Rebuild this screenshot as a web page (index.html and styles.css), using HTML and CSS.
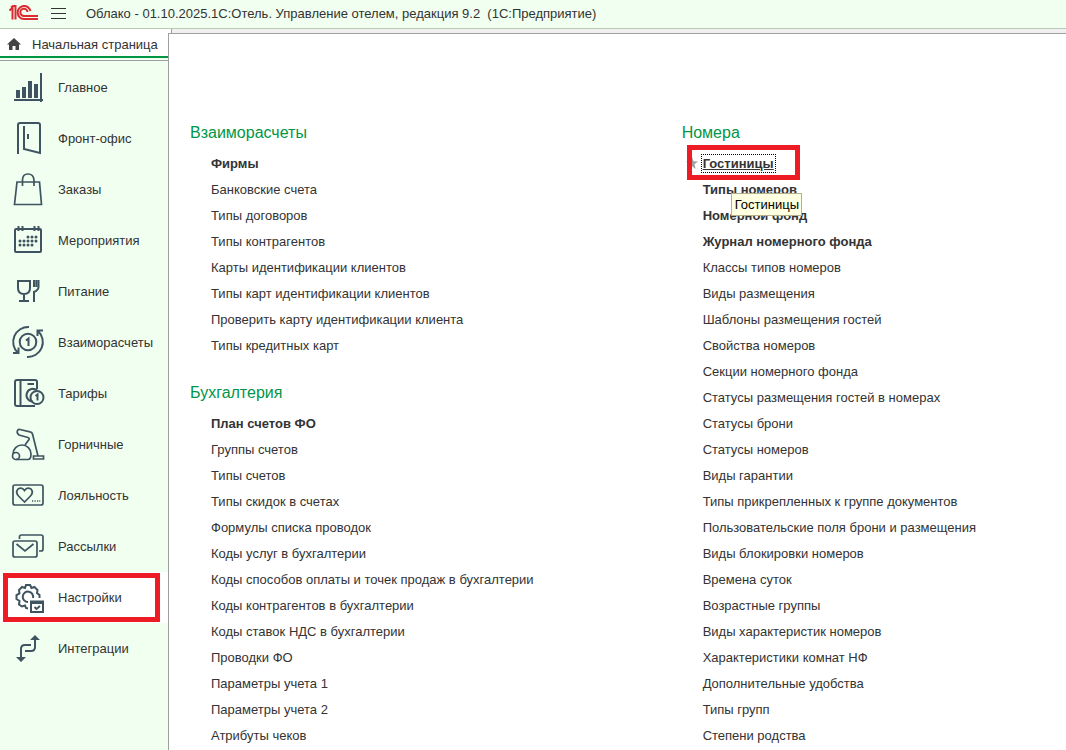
FILE: index.html
```
<!DOCTYPE html>
<html lang="ru">
  <head>
    <meta charset="UTF-8" />
    <meta name="viewport" content="width=device-width, initial-scale=1.0" />
    <title>1С:Отель. Управление отелем</title>
    <link rel="stylesheet" href="styles.css">
  </head>
  <body>
    <header class="titlebar">
      <svg class="logo" viewBox="0 0 30 16" width="30" height="16">
        <path d="M0.500 5.500L3.500 3V14.500M2 2.500L4 1H6.500V14.500" />
        <path d="M21.500 6A6.500 6.500 0 1 0 15 14H29" />
        <path d="M18.500 7A3.600 3.600 0 1 0 15 11H29" />
      </svg>
      <button class="menu-btn" aria-label="Меню"><span></span><span></span><span></span></button>
      <h1 class="app-title">Облако - 01.10.2025.1С:Отель. Управление отелем, редакция 9.2&nbsp; (1С:Предприятие)</h1>
    </header>

    <div class="workspace">
      <div class="side">
        <a href="#" class="home-tab">
          <svg viewBox="0 0 14 12" width="14" height="12"><path d="M7 0 L14 6.5 H12 V12 H8.5 V8 H5.5 V12 H2 V6.5 H0 Z" /></svg>
          Начальная страница
        </a>
        <nav class="sections">
          <a href="#" class="section">
            <svg class="icon" viewBox="0 0 35 35"><path class="solid" d="M6 20h4v8H6zM12 17h4v11h-4zM18 11h4v17h-4zM24 14h4v14h-4zM30 3h2v29h-2zM4 29h29v2H4z" /></svg>
            Главное
          </a>
          <a href="#" class="section">
            <svg class="icon" viewBox="0 0 35 35"><path d="M8 33V4q0-2 2-2h18q2 0 2 2v28L14 28V5M18 13v5" /></svg>
            Фронт-офис
          </a>
          <a href="#" class="section">
            <svg class="icon thin" viewBox="0 0 35 35"><path d="M7 10h22.500l2 22.500h-27zM12.500 14V8q0-6 5.500-6t6 6v6" /></svg>
            Заказы
          </a>
          <a href="#" class="section">
            <svg class="icon" viewBox="0 0 35 35">
              <rect x="5" y="6" width="26" height="23" rx="1" />
              <path d="M8.500 3v5M12.500 3v5M24.500 3v5M28.500 3v5" />
              <path class="dots" d="M18 14h0M22 14h0M26 14h0M10 18h0M14 18h0M18 18h0M22 18h0M26 18h0M10 22h0M14 22h0M18 22h0M22 22h0" />
            </svg>
            Мероприятия
          </a>
          <a href="#" class="section">
            <svg class="icon" viewBox="0 0 35 35"><path d="M8 7h12v7q0 6-6 6t-6-6zM14 20v7M9 27h10M24 6v7M28.500 6v7q0 3-4.500 5v10M26.300 6v7" /></svg>
            Питание
          </a>
          <a href="#" class="section">
            <svg class="icon" viewBox="0 0 35 35">
              <circle cx="18" cy="17" r="8.300" />
              <path d="M19 2A15 15 0 0 0 8 28M3 28h5.500v-5.500M17 32A15 15 0 0 0 28 6M27.500 11V5.500H33" />
              <path d="M16 15.500l2.500-2V21" />
            </svg>
            Взаиморасчеты
          </a>
          <a href="#" class="section">
            <svg class="icon" viewBox="0 0 35 35">
              <path d="M27 13V6q0-2-2-2H7Q5 4 5 6v22q0 2 2 2h18M10.500 4v26M17.500 8H24" />
              <path d="M23 25.500A6.300 6.300 0 1 1 27 14.500" />
              <circle cx="27" cy="21.500" r="6.500" />
              <path d="M25.500 20l2-1.500v6" />
            </svg>
            Тарифы
          </a>
          <a href="#" class="section">
            <svg class="icon thin" viewBox="0 0 35 35">
              <path d="M3 27C3 22 7 18 12 18c5 0 9 4 9 9 0 3-1 5.500-3 5.500H6" />
              <circle cx="6" cy="29" r="3.500" />
              <path d="M28 29L22.500 7q-.5-2-2.500-2.200L10 2.500Q8 2 7.300 4T9 8l9 2.500q1.500.5 1 2L15 18" />
              <path d="M23.500 29h10v3h-10z" />
            </svg>
            Горничные
          </a>
          <a href="#" class="section">
            <svg class="icon thin" viewBox="0 0 35 35">
              <rect x="3" y="7" width="30" height="20" rx="2" />
              <path d="M14.500 24L9 18.500q-4-4-1-7.500 4-2.500 6.500 1.500Q17 8.500 21 11q3 3.500-1 7.500z" />
              <path d="M22 23h1.200M24.500 23h1.200M27 23h1.200M29.300 23h1" />
            </svg>
            Лояльность
          </a>
          <a href="#" class="section">
            <svg class="icon thin" viewBox="0 0 35 35">
              <path d="M9.500 10V8q0-2 2-2H31q2 0 2 2v12q0 2-2 2h-2" />
              <rect x="3" y="12" width="24" height="16" rx="2" />
              <path d="M6.500 15l8.500 7 8.500-7" />
            </svg>
            Рассылки
          </a>
          <a href="#" class="section active">
            <svg class="icon" viewBox="0 0 35 35">
              <path d="M18 28.500l-2-.5-1-2.500-3 1-3-2 .5-3.500L6.500 19v-4l3-1.500L9 10l3-3 3 1 1-3h4l1.500 3 3-1L27.500 10l-.5 3 2.500 2v3" />
              <path d="M18 22a5.200 5.200 0 1 1 5-4" />
              <path d="M21 21.500h12v10.500H21zM21 23h12M24.500 27l2 2 3.500-3" />
            </svg>
            Настройки
          </a>
          <a href="#" class="section">
            <svg class="icon" viewBox="0 0 35 35">
              <path d="M11 27v-9q0-4 4-4h6M25 8v8q0 4-4 4h-6" />
              <path class="solid" d="M25 4l5 5H20zM11 31l-5-5h10z" />
            </svg>
            Интеграции
          </a>
        </nav>
      </div>

      <div class="content">
        <main class="panel">
          <div class="column">
            <section class="group">
              <h2>Взаиморасчеты</h2>
              <ul>
                <li><a href="#" class="main-link">Фирмы</a></li>
                <li><a href="#">Банковские счета</a></li>
                <li><a href="#">Типы договоров</a></li>
                <li><a href="#">Типы контрагентов</a></li>
                <li><a href="#">Карты идентификации клиентов</a></li>
                <li><a href="#">Типы карт идентификации клиентов</a></li>
                <li><a href="#">Проверить карту идентификации клиента</a></li>
                <li><a href="#">Типы кредитных карт</a></li>
              </ul>
            </section>
            <section class="group">
              <h2>Бухгалтерия</h2>
              <ul>
                <li><a href="#" class="main-link">План счетов ФО</a></li>
                <li><a href="#">Группы счетов</a></li>
                <li><a href="#">Типы счетов</a></li>
                <li><a href="#">Типы скидок в счетах</a></li>
                <li><a href="#">Формулы списка проводок</a></li>
                <li><a href="#">Коды услуг в бухгалтерии</a></li>
                <li><a href="#">Коды способов оплаты и точек продаж в бухгалтерии</a></li>
                <li><a href="#">Коды контрагентов в бухгалтерии</a></li>
                <li><a href="#">Коды ставок НДС в бухгалтерии</a></li>
                <li><a href="#">Проводки ФО</a></li>
                <li><a href="#">Параметры учета 1</a></li>
                <li><a href="#">Параметры учета 2</a></li>
                <li><a href="#">Атрибуты чеков</a></li>
              </ul>
            </section>
          </div>
          <div class="column">
            <section class="group">
              <h2>Номера</h2>
              <ul>
                <li class="current">
                  <svg class="star" viewBox="0 0 12 12" width="12" height="12"><path d="M6 0l1.600 4.200L12 4.400 8.500 7.200 9.700 12 6 9.200 2.300 12l1.200-4.800L0 4.400l4.400-.2z" /></svg>
                  <a href="#" class="main-link focused">Гостиницы</a>
                  <span class="tooltip" role="tooltip">Гостиницы</span>
                </li>
                <li><a href="#" class="main-link">Типы номеров</a></li>
                <li><a href="#" class="main-link">Номерной фонд</a></li>
                <li><a href="#" class="main-link">Журнал номерного фонда</a></li>
                <li><a href="#">Классы типов номеров</a></li>
                <li><a href="#">Виды размещения</a></li>
                <li><a href="#">Шаблоны размещения гостей</a></li>
                <li><a href="#">Свойства номеров</a></li>
                <li><a href="#">Секции номерного фонда</a></li>
                <li><a href="#">Статусы размещения гостей в номерах</a></li>
                <li><a href="#">Статусы брони</a></li>
                <li><a href="#">Статусы номеров</a></li>
                <li><a href="#">Виды гарантии</a></li>
                <li><a href="#">Типы прикрепленных к группе документов</a></li>
                <li><a href="#">Пользовательские поля брони и размещения</a></li>
                <li><a href="#">Виды блокировки номеров</a></li>
                <li><a href="#">Времена суток</a></li>
                <li><a href="#">Возрастные группы</a></li>
                <li><a href="#">Виды характеристик номеров</a></li>
                <li><a href="#">Характеристики комнат НФ</a></li>
                <li><a href="#">Дополнительные удобства</a></li>
                <li><a href="#">Типы групп</a></li>
                <li><a href="#">Степени родства</a></li>
              </ul>
            </section>
          </div>
        </main>
      </div>
    </div>
  </body>
</html>
```
FILE: styles.css
```
*,
*::before,
*::after {
  box-sizing: border-box;
}

body {
  margin: 0;
  min-height: 100vh;
  display: flex;
  flex-direction: column;
  font-family: "Liberation Sans", Arial, sans-serif;
  font-size: 13px;
  color: #333333;
  background-color: #ffffff;
}

a {
  color: inherit;
  text-decoration: none;
}

/* Title bar */
.titlebar {
  display: flex;
  align-items: center;
  height: 29px;
  padding: 0 0 2px 9px;
  background-color: #f0fff0;
  border-bottom: 1px solid #b9c9b9;
}

.logo {
  fill: none;
  stroke: #dc2a30;
  stroke-width: 2;
}

.menu-btn {
  display: flex;
  flex-direction: column;
  gap: 4px;
  width: 15px;
  margin: 0 20px 0 12px;
  padding: 0;
  border: none;
  background: none;
}

.menu-btn span {
  height: 1px;
  background-color: #333333;
}

.app-title {
  margin: 0;
  font-size: 13px;
  font-weight: normal;
}

.workspace {
  flex: 1;
  display: flex;
}

/* Sections panel */
.side {
  flex: none;
  width: 168px;
  background-color: #f0fff0;
}

.home-tab {
  display: flex;
  align-items: center;
  gap: 11px;
  height: 29px;
  padding: 3px 0 0 7px;
  background-color: #ffffff;
  border-bottom: 2px solid #009646;
}

.home-tab svg {
  fill: #444444;
}

.sections {
  margin-top: 2px;
  padding-top: 1px;
  border-top: 1px solid #a0a0a0;
}

.section {
  display: flex;
  align-items: center;
  gap: 13px;
  height: 51px;
  padding-left: 10px;
}

.section.active {
  position: relative;
  background-color: #ffffff;
}

.section.active::after {
  content: "";
  position: absolute;
  inset: 1px 8px 1px 3px;
  border: 5px solid #ed1c24;
}

.icon {
  width: 35px;
  height: 35px;
  fill: none;
  stroke: #3f5460;
  stroke-width: 2;
}

.icon.thin {
  stroke-width: 1.7;
}

.icon .solid {
  fill: #3f5460;
  stroke: none;
}

.icon .dots {
  stroke-width: 3;
  stroke-linecap: round;
}

/* Function panel */
.content {
  flex: 1;
  display: flex;
  padding-top: 4px;
  background: linear-gradient(to right, #ffffff 3px, #a0a0a0 3px 4px, #f0f0f0 4px);
}

.panel {
  flex: 1;
  display: grid;
  grid-template-columns: 9fr 7fr;
  padding: 85px 2px 0 21px;
  background-color: #ffffff;
  border-top: 1px solid #a0a0a0;
  border-left: 1px solid #a0a0a0;
}

.group {
  margin-bottom: 20px;
}

.column .group:last-child {
  margin-bottom: 0;
}

.group h2 {
  margin: 0 0 4px;
  font-size: 16px;
  font-weight: normal;
  line-height: 28px;
  color: #009646;
}

.group ul {
  margin: 0;
  padding-left: 21px;
  list-style: none;
}

.group li {
  line-height: 26px;
  height: 26px;
}

.main-link {
  font-weight: bold;
}

.current {
  position: relative;
}

.current::after {
  content: "";
  position: absolute;
  left: -16px;
  top: -6px;
  width: 113px;
  height: 35px;
  border: 5px solid #ed1c24;
}

.focused {
  text-decoration: underline;
  outline: 1px dotted #000000;
  outline-offset: 1px;
}

.star {
  position: absolute;
  left: -17px;
  top: 6px;
  fill: #a0a0a0;
}

.tooltip {
  position: absolute;
  left: 28px;
  top: 42px;
  z-index: 1;
  padding: 0 2px 0 3px;
  line-height: 21px;
  color: #000000;
  background-color: #ffffe1;
  border: 1px solid #b4b08c;
}
```
